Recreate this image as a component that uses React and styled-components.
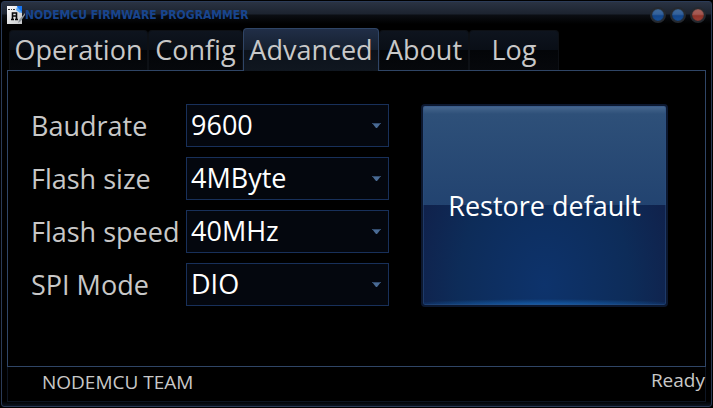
import React, { useState } from "react";
import styled, { createGlobalStyle } from "styled-components";

const tabList = [
  { name: "Operation", width: 139 },
  { name: "Config", width: 95 },
  { name: "Advanced", width: 136 },
  { name: "About", width: 90 },
  { name: "Log", width: 90 },
];

const fieldList = [
  {
    id: "baudrate",
    label: "Baudrate",
    value: "9600",
    options: ["9600", "57600", "115200", "230400"],
  },
  {
    id: "flash-size",
    label: "Flash size",
    value: "4MByte",
    options: ["512KByte", "1MByte", "2MByte", "4MByte"],
  },
  {
    id: "flash-speed",
    label: "Flash speed",
    value: "40MHz",
    options: ["20MHz", "26.7MHz", "40MHz", "80MHz"],
  },
  {
    id: "spi-mode",
    label: "SPI Mode",
    value: "DIO",
    options: ["QIO", "QOUT", "DIO", "DOUT"],
  },
];

const defaultValues = Object.fromEntries(
  fieldList.map((field) => [field.id, field.value])
);

const AppIcon = () => (
  <svg width="18" height="18" viewBox="0 0 18 18" aria-hidden="true">
    <defs>
      <linearGradient id="paper" x1="0" y1="0" x2="1" y2="1">
        <stop offset="0" stopColor="#ffffff" />
        <stop offset="1" stopColor="#c4c6c8" />
      </linearGradient>
    </defs>
    <path d="M0 0H11L15 4V18H0Z" fill="url(#paper)" />
    <path d="M10 0H15V7L11 4Z" fill="#1673ee" />
    <path d="M10 1L15 6L13 7L9 4Z" fill="#58a9f8" />
    <path d="M1 3.5H3M4 3.5H5M6 3.5H8" stroke="#333" strokeWidth="1" />
    <path
      d="M5.5 13V7H9.5V13M5 10H10M4 13.5H7M8 13.5H11"
      fill="none"
      stroke="#080808"
      strokeWidth="1.6"
    />
    <path d="M18 7L12 14L11 17L14 15L18 9Z" fill="#8b9299" />
  </svg>
);

const App = () => {
  const [activeTab, setActiveTab] = useState("Advanced");
  const [values, setValues] = useState(defaultValues);

  return (
    <>
      <GlobalStyle />
      <Window>
        <TitleBar>
          <AppIcon />
          <Title>NODEMCU FIRMWARE PROGRAMMER</Title>
          <WindowButtons>
            <WindowButton aria-label="Minimize" />
            <WindowButton aria-label="Maximize" />
            <WindowButton aria-label="Close" $close />
          </WindowButtons>
        </TitleBar>
        <TabBar role="tablist">
          {tabList.map((tab) => (
            <Tab
              key={tab.name}
              role="tab"
              aria-selected={tab.name === activeTab}
              $active={tab.name === activeTab}
              $width={tab.width}
              onClick={() => setActiveTab(tab.name)}
            >
              {tab.name}
            </Tab>
          ))}
        </TabBar>
        <Panel role="tabpanel">
          <FieldList>
            {fieldList.map((field) => (
              <Field key={field.id}>
                <Label htmlFor={field.id}>{field.label}</Label>
                <SelectWrapper>
                  <Select
                    id={field.id}
                    value={values[field.id]}
                    onChange={(e) =>
                      setValues({ ...values, [field.id]: e.target.value })
                    }
                  >
                    {field.options.map((option) => (
                      <option key={option}>{option}</option>
                    ))}
                  </Select>
                  <Arrow viewBox="0 0 9 5" aria-hidden="true">
                    <path d="M0 0H9L5 5H4Z" fill="#4a6b94" />
                    <path d="M0 0H9V1H0Z" fill="#314a6c" />
                  </Arrow>
                </SelectWrapper>
              </Field>
            ))}
          </FieldList>
          <RestoreButton onClick={() => setValues(defaultValues)}>
            Restore default
          </RestoreButton>
        </Panel>
        <StatusBar>
          <span>NODEMCU TEAM</span>
          <Status>Ready</Status>
        </StatusBar>
      </Window>
    </>
  );
};

export default App;

const GlobalStyle = createGlobalStyle`
  * {
    box-sizing: border-box;
  }
  body {
    margin: 0;
    background-color: #000;
    color: #c8c8c8;
    font-family: "Open Sans", "Noto Sans", sans-serif;
  }
  button, select {
    font-family: inherit;
  }
`;

const Window = styled.div`
  min-height: calc(100vh - 2px);
  margin: 1px;
  padding: 0 5px 4px 5px;
  display: flex;
  flex-direction: column;
  border: 1px solid #2b3b57;
  border-radius: 3px;
  background: linear-gradient(
      #2a3343 0,
      #1c232f 12px,
      #0b0e13 13px,
      #000 22px,
      transparent 22px
    ),
    linear-gradient(to top, #0c1420, #000 5px);
`;

const TitleBar = styled.header`
  height: 25px;
  display: flex;
  align-items: center;
`;

const Title = styled.h1`
  flex: 1;
  margin: 0;
  font-family: "DejaVu Sans Condensed", "DejaVu Sans", sans-serif;
  font-size: 12px;
  font-weight: bold;
  line-height: 16px;
  color: #18458e;
`;

const WindowButtons = styled.div`
  display: flex;
  gap: 4px;
`;

const WindowButton = styled.button`
  width: 16px;
  height: 16px;
  padding: 0;
  border: 2px solid #25292f;
  border-radius: 50%;
  background: ${({ $close }) =>
      $close
        ? "linear-gradient(#a8665f 0, #a35750 45%, #8e3329 55%, #a2453b 100%)"
        : "linear-gradient(#46709f 0, #33619b 45%, #12458a 55%, #1b559c 100%)"}
    border-box;
  box-shadow: inset 0 0 1px #15181d;
`;

const TabBar = styled.div`
  display: flex;
  align-items: flex-end;
  height: 43px;
  padding-left: 2px;
`;

const Tab = styled.button`
  width: ${({ $width }) => $width}px;
  height: ${({ $active }) => ($active ? 43 : 40)}px;
  margin-bottom: ${({ $active }) => ($active ? -1 : 0)}px;
  padding: ${({ $active }) => ($active ? 0 : "0 0 2px")};
  border: 1px solid ${({ $active }) => ($active ? "#2f4566" : "#0d1015")};
  border-bottom: none;
  border-radius: 4px 4px 0 0;
  background: ${({ $active }) =>
    $active
      ? "linear-gradient(#202e47 0, #16202f 50%, #0c121b 50%, #101720 100%)"
      : "linear-gradient(#0e141e 0, #090e16 50%, #030508 50%, #06080c 100%)"};
  color: #c8c8c8;
  font-size: 27px;
  line-height: 36px;
  z-index: ${({ $active }) => ($active ? 1 : 0)};
`;

const Panel = styled.main`
  flex: 1;
  display: grid;
  grid-template-columns: 358fr 247fr;
  align-items: start;
  gap: 32px;
  padding: 33px 37px 32px 23px;
  border: 1px solid #2f4566;
`;

const FieldList = styled.div`
  height: 202px;
  display: flex;
  flex-direction: column;
  justify-content: space-between;
`;

const Field = styled.div`
  display: flex;
  align-items: center;
`;

const Label = styled.label`
  flex: 0 0 155px;
  font-size: 27px;
  line-height: 36px;
  white-space: nowrap;
`;

const SelectWrapper = styled.div`
  position: relative;
  flex: 1;
`;

const Select = styled.select`
  display: block;
  width: 100%;
  height: 43px;
  padding: 0 24px 2px 4px;
  appearance: none;
  border: 1px solid #18305a;
  border-radius: 0;
  background-color: #04070e;
  color: #fff;
  font-size: 27px;
  line-height: 36px;
`;

const Arrow = styled.svg`
  position: absolute;
  top: 19px;
  right: 8px;
  width: 9px;
  height: 5px;
  pointer-events: none;
`;

const RestoreButton = styled.button`
  height: 203px;
  padding: 0;
  border: 2px solid #0c1830;
  border-radius: 4px;
  background: radial-gradient(
        ellipse 60% 6px at 50% 100%,
        #1560ae,
        transparent
      )
      no-repeat,
    linear-gradient(#496990 0, #2e5079 8px, #224370 50%, transparent 50%),
    radial-gradient(ellipse 54% 90% at 50% 90%, #0d336c, #0d2c59 65%, #10224c);
  box-shadow: inset 0 0 0 1px #2c508480;
  color: #fff;
  font-size: 27px;
  line-height: 36px;
`;

const StatusBar = styled.footer`
  height: 35px;
  display: flex;
  justify-content: space-between;
  padding-left: 34px;
  border: 1px solid #0e1623;
  border-top: none;
  font-size: 19px;
  line-height: 31px;
`;

const Status = styled.span`
  line-height: 27px;
`;
